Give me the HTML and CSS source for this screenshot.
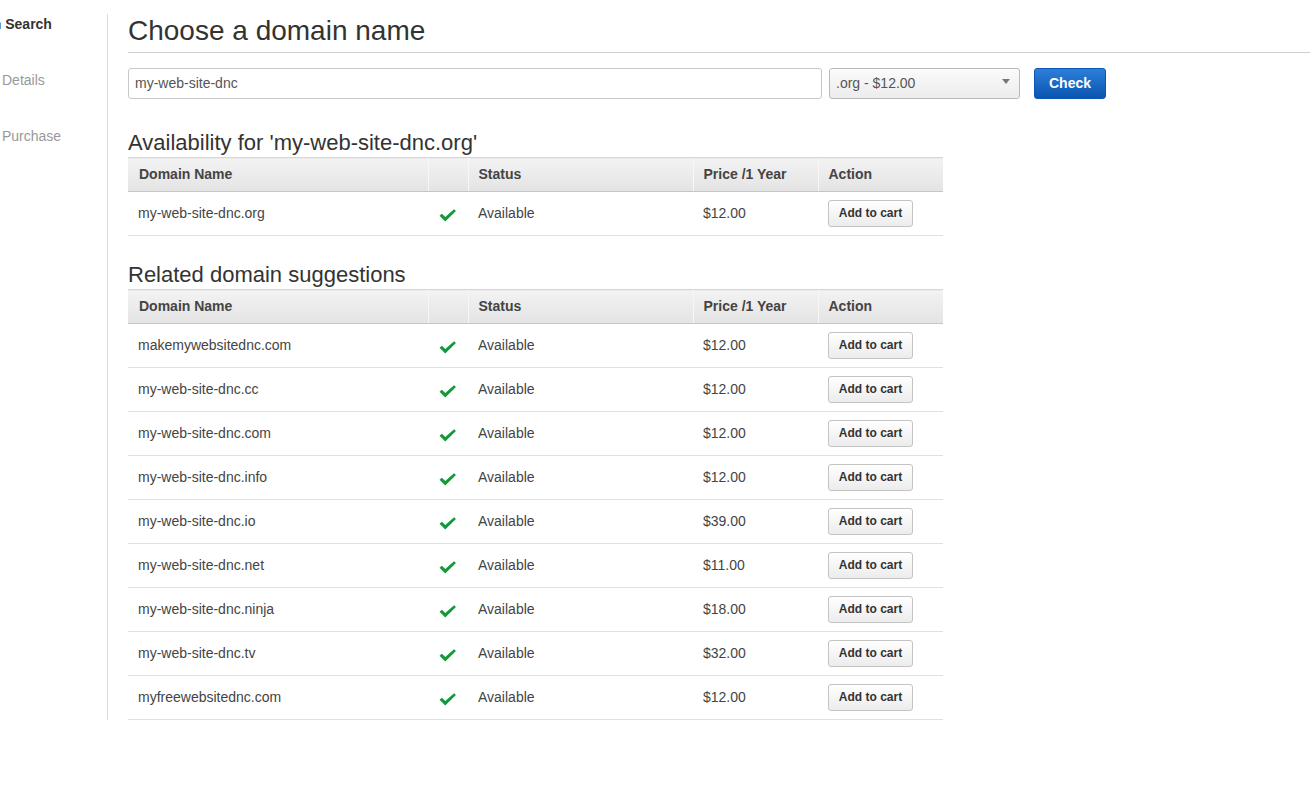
FILE: index.html
```html
<!DOCTYPE html>
<html lang="en">
<head>
<meta charset="utf-8">
<title>Choose a domain name</title>
<link rel="stylesheet" href="styles.css">
</head>
<body>
<div class="page">
  <nav class="steps">
    <div class="step active"><span class="clip">Domain Search</span></div>
    <div class="step">Details</div>
    <div class="step">Purchase</div>
  </nav>
  <main class="main">
    <h1 class="title">Choose a domain name</h1>
    <div class="search">
      <input class="domain-input" type="text" value="my-web-site-dnc">
      <div class="select"><span>.org - $12.00</span><span class="caret"></span></div>
      <button class="btn-check">Check</button>
    </div>

    <h2 class="section">Availability for 'my-web-site-dnc.org'</h2>
    <table class="results">
      <colgroup><col class="c-name"><col class="c-icon"><col class="c-status"><col class="c-price"><col class="c-action"></colgroup>
      <thead><tr><th>Domain Name</th><th></th><th>Status</th><th>Price /1 Year</th><th>Action</th></tr></thead>
      <tbody>
        <tr><td>my-web-site-dnc.org</td><td class="icon"><svg viewBox="0 0 20 16" width="19" height="15"><path d="M1.5 8.2 L4 6 L7.6 9.6 L17 1.2 L19 3.3 L7.6 14.5 Z" fill="#14993a"/></svg></td><td>Available</td><td>$12.00</td><td><button class="btn-cart">Add to cart</button></td></tr>
      </tbody>
    </table>

    <h2 class="section second">Related domain suggestions</h2>
    <table class="results">
      <colgroup><col class="c-name"><col class="c-icon"><col class="c-status"><col class="c-price"><col class="c-action"></colgroup>
      <thead><tr><th>Domain Name</th><th></th><th>Status</th><th>Price /1 Year</th><th>Action</th></tr></thead>
      <tbody>
        <tr><td>makemywebsitednc.com</td><td class="icon"><svg viewBox="0 0 20 16" width="19" height="15"><path d="M1.5 8.2 L4 6 L7.6 9.6 L17 1.2 L19 3.3 L7.6 14.5 Z" fill="#14993a"/></svg></td><td>Available</td><td>$12.00</td><td><button class="btn-cart">Add to cart</button></td></tr>
        <tr><td>my-web-site-dnc.cc</td><td class="icon"><svg viewBox="0 0 20 16" width="19" height="15"><path d="M1.5 8.2 L4 6 L7.6 9.6 L17 1.2 L19 3.3 L7.6 14.5 Z" fill="#14993a"/></svg></td><td>Available</td><td>$12.00</td><td><button class="btn-cart">Add to cart</button></td></tr>
        <tr><td>my-web-site-dnc.com</td><td class="icon"><svg viewBox="0 0 20 16" width="19" height="15"><path d="M1.5 8.2 L4 6 L7.6 9.6 L17 1.2 L19 3.3 L7.6 14.5 Z" fill="#14993a"/></svg></td><td>Available</td><td>$12.00</td><td><button class="btn-cart">Add to cart</button></td></tr>
        <tr><td>my-web-site-dnc.info</td><td class="icon"><svg viewBox="0 0 20 16" width="19" height="15"><path d="M1.5 8.2 L4 6 L7.6 9.6 L17 1.2 L19 3.3 L7.6 14.5 Z" fill="#14993a"/></svg></td><td>Available</td><td>$12.00</td><td><button class="btn-cart">Add to cart</button></td></tr>
        <tr><td>my-web-site-dnc.io</td><td class="icon"><svg viewBox="0 0 20 16" width="19" height="15"><path d="M1.5 8.2 L4 6 L7.6 9.6 L17 1.2 L19 3.3 L7.6 14.5 Z" fill="#14993a"/></svg></td><td>Available</td><td>$39.00</td><td><button class="btn-cart">Add to cart</button></td></tr>
        <tr><td>my-web-site-dnc.net</td><td class="icon"><svg viewBox="0 0 20 16" width="19" height="15"><path d="M1.5 8.2 L4 6 L7.6 9.6 L17 1.2 L19 3.3 L7.6 14.5 Z" fill="#14993a"/></svg></td><td>Available</td><td>$11.00</td><td><button class="btn-cart">Add to cart</button></td></tr>
        <tr><td>my-web-site-dnc.ninja</td><td class="icon"><svg viewBox="0 0 20 16" width="19" height="15"><path d="M1.5 8.2 L4 6 L7.6 9.6 L17 1.2 L19 3.3 L7.6 14.5 Z" fill="#14993a"/></svg></td><td>Available</td><td>$18.00</td><td><button class="btn-cart">Add to cart</button></td></tr>
        <tr><td>my-web-site-dnc.tv</td><td class="icon"><svg viewBox="0 0 20 16" width="19" height="15"><path d="M1.5 8.2 L4 6 L7.6 9.6 L17 1.2 L19 3.3 L7.6 14.5 Z" fill="#14993a"/></svg></td><td>Available</td><td>$32.00</td><td><button class="btn-cart">Add to cart</button></td></tr>
        <tr><td>myfreewebsitednc.com</td><td class="icon"><svg viewBox="0 0 20 16" width="19" height="15"><path d="M1.5 8.2 L4 6 L7.6 9.6 L17 1.2 L19 3.3 L7.6 14.5 Z" fill="#14993a"/></svg></td><td>Available</td><td>$12.00</td><td><button class="btn-cart">Add to cart</button></td></tr>
      </tbody>
    </table>
  </main>
</div>
</body>
</html>
```

FILE: styles.css
```css
html, body {
  margin: 0;
  padding: 0;
  background: #fff;
}
body {
  font-family: "Liberation Sans", Arial, Helvetica, sans-serif;
  font-size: 14px;
  color: #444;
}
.page {
  display: flex;
  align-items: flex-start;
  padding-top: 14px;
}
.steps {
  width: 107px;
  flex: 0 0 107px;
  border-right: 1px solid #dcdcdc;
  align-self: stretch;
  overflow: hidden;
}
.step {
  height: 56px;
  line-height: 20px;
  font-size: 14px;
  color: #999;
  padding-left: 2px;
}
.step.active {
  color: #333;
  font-weight: bold;
}
.clip {
  display: block;
  white-space: nowrap;
  margin-left: -52px;
}
.main {
  flex: 1;
  padding-left: 20px;
}
.title {
  margin: 0;
  font-size: 28px;
  font-weight: normal;
  line-height: 34px;
  color: #333;
  padding-bottom: 4px;
  border-bottom: 1px solid #cfcfcf;
}
.search {
  display: flex;
  align-items: center;
  margin-top: 15px;
  height: 31px;
}
.domain-input {
  box-sizing: border-box;
  width: 694px;
  height: 31px;
  border: 1px solid #c8c8c8;
  border-radius: 3px;
  padding: 0 6px 1px;
  font: 14px "Liberation Sans", Arial, sans-serif;
  color: #555;
  outline: none;
}
.select {
  box-sizing: border-box;
  margin-left: 7px;
  width: 191px;
  height: 31px;
  border: 1px solid #b9b9b9;
  border-radius: 3px;
  background: linear-gradient(#fbfbfb, #ececec);
  box-shadow: inset 0 1px 0 #fff;
  display: flex;
  align-items: center;
  justify-content: space-between;
  padding: 0 9px 1px 6px;
  color: #555;
  font-size: 14px;
}
.caret {
  width: 0;
  height: 0;
  border-left: 4px solid transparent;
  border-right: 4px solid transparent;
  border-top: 5px solid #777;
  margin-top: -4px;
}
.btn-check {
  margin-left: 14px;
  box-sizing: border-box;
  width: 72px;
  height: 31px;
  border: 1px solid #0b57b3;
  border-radius: 3px;
  background: linear-gradient(#2d7fd9, #0a55b0);
  color: #fff;
  font: bold 14px "Liberation Sans", Arial, sans-serif;
  padding: 0 0 1px;
}
.section {
  margin: 0;
  font-size: 22px;
  font-weight: normal;
  line-height: 26px;
  color: #333;
  margin-top: 31px;
  padding-bottom: 1px;
}
.section.second {
  margin-top: 26px;
}
.results {
  width: 815px;
  border-collapse: collapse;
  table-layout: fixed;
}
.c-name { width: 300px; }
.c-icon { width: 40px; }
.c-status { width: 225px; }
.c-price { width: 125px; }
.c-action { width: 125px; }
.results th {
  height: 34px;
  box-sizing: border-box;
  padding: 0 10px 1px;
  text-align: left;
  font-weight: bold;
  font-size: 14px;
  color: #444;
  background: linear-gradient(#f3f3f3, #e3e3e3);
  border-top: 1px solid #d6d6d6;
  border-bottom: 1px solid #c6c6c6;
  border-left: 1px solid #f7f7f7;
}
.results th:first-child {
  border-left: none;
  padding-left: 11px;
}
.results td {
  height: 44px;
  box-sizing: border-box;
  padding: 0 10px 1px;
  border-bottom: 1px solid #e0e0e0;
  color: #444;
  font-size: 14px;
  vertical-align: middle;
}
.results td.icon {
  padding: 4px 0 0 10px;
}
.results td.icon svg {
  display: block;
}
.btn-cart {
  box-sizing: border-box;
  width: 85px;
  height: 27px;
  border: 1px solid #c4c4c4;
  border-radius: 3px;
  background: linear-gradient(#ffffff, #ececec);
  color: #333;
  font: bold 12px "Liberation Sans", Arial, sans-serif;
  padding: 0 0 1px;
}
```
